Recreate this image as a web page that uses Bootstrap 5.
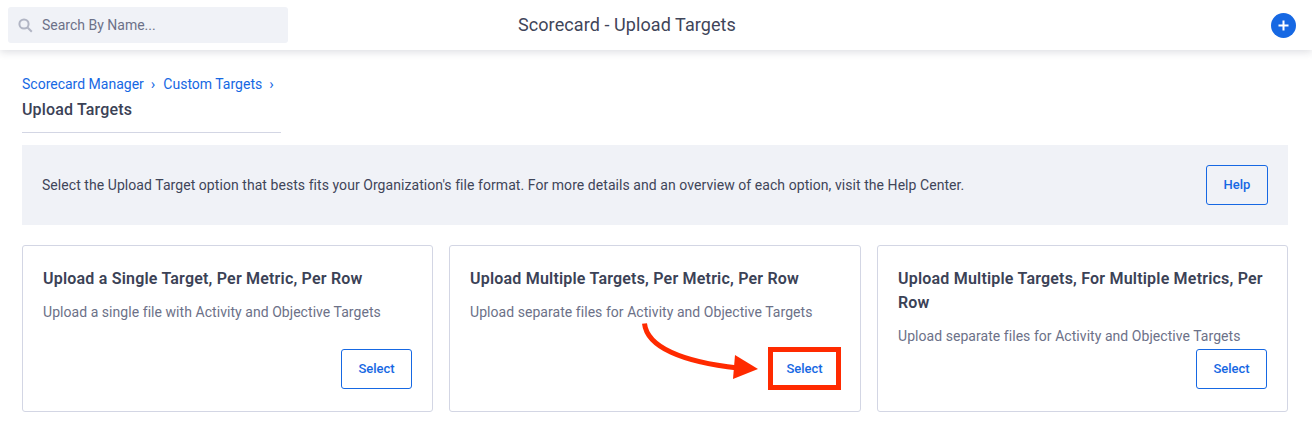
<!DOCTYPE html>
<html lang="en">
<head>
    <meta charset="UTF-8">
    <title>Scorecard - Upload Targets</title>
    <link href="https://cdn.jsdelivr.net/npm/bootstrap@5.3.0/dist/css/bootstrap.min.css" rel="stylesheet">
    <style>
        body { font-family: "Roboto", "Liberation Sans", sans-serif; color: #3b4256; background: #fff; height: 426px; overflow: hidden; position: relative; }
        .top-bar { height: 50px; padding: 7px 16px 7px 8px; box-shadow: 0 2px 8px rgba(40, 45, 70, .16); }
        .search-box { height: 36px; width: 280px; background: #f0f2f7; border-radius: 3px; padding-left: 10px; gap: 9px; color: #6c7188; font-size: 14px; }
        .top-title { font-size: 18px; letter-spacing: .08px; margin-left: 230px; margin-right: auto; margin-bottom: 2px; color: #3f4559; }
        .add-btn { width: 25px; height: 25px; border-radius: 50%; background: #1668e3; }
        .page-body { padding: 25px 24px 0 22px; }
        .crumbs { font-size: 14px; line-height: 18px; gap: 7px; }
        .crumbs a { color: #1668e3; text-decoration: none; }
        .crumbs a + span + a { margin-left: 1px; }
        .crumbs span { color: #1668e3; font-size: 15px; }
        .page-name { font-size: 16px; line-height: 20px; font-weight: 500; letter-spacing: .15px; margin-top: 7px; padding-bottom: 12px; width: 259px; border-bottom: 1px solid #d3d6e4; }
        .help-banner { height: 80px; margin-top: 12px; background: #f0f2f7; padding: 0 20px; font-size: 14px; letter-spacing: .06px; color: #3f4559; }
        .outline-act { border: 1px solid #1668e3; border-radius: 3px; color: #1668e3; background: transparent; font-weight: 500; font-size: 13px; padding: 0; height: 40px; }
        .outline-act:hover { color: #1668e3; }
        .help-act { width: 62px; }
        .select-act { width: 71px; }
        .card-row { display: grid; grid-template-columns: 411px 412px 411px; gap: 16px; margin-top: 20px; }
        .target-card { height: 167px; border: 1px solid #d3d6e4; border-radius: 3px; padding: 21px 20px 22px 20px; }
        .target-card h5 { font-size: 16px; line-height: 24px; font-weight: 600; letter-spacing: .2px; margin: 0 0 11px; color: #3b4256; }
        .target-card p { font-size: 14px; line-height: 20px; letter-spacing: .05px; color: #6c7188; margin: 0; }
        .annotation { position: absolute; left: 620px; top: 310px; }
    </style>
</head>
<body>
    <div class="top-bar d-flex align-items-center">
        <div class="search-box d-flex align-items-center">
            <svg width="15" height="15" viewBox="0 0 15 15" fill="none" stroke="#b1b5c4" stroke-width="2"><circle cx="6" cy="6" r="4.6"/><path d="M9.5 9.5L13.8 13.8"/></svg>
            <span>Search By Name...</span>
        </div>
        <div class="top-title">Scorecard - Upload Targets</div>
        <div class="add-btn d-flex align-items-center justify-content-center">
            <svg width="11" height="11" viewBox="0 0 11 11" stroke="#fff" stroke-width="2"><path d="M5.5 .5v10M.5 5.5h10"/></svg>
        </div>
    </div>

    <div class="page-body">
        <div class="crumbs d-flex align-items-center">
            <a href="#">Scorecard Manager</a><span>›</span>
            <a href="#">Custom Targets</a><span>›</span>
        </div>
        <div class="page-name">Upload Targets</div>

        <div class="help-banner d-flex align-items-center justify-content-between">
            <div>Select the Upload Target option that bests fits your Organization's file format. For more details and an overview of each option, visit the Help Center.</div>
            <button class="btn outline-act help-act">Help</button>
        </div>

        <div class="card-row">
            <div class="target-card d-flex flex-column">
                <h5>Upload a Single Target, Per Metric, Per Row</h5>
                <p>Upload a single file with Activity and Objective Targets</p>
                <div class="mt-auto d-flex justify-content-end"><button class="btn outline-act select-act">Select</button></div>
            </div>
            <div class="target-card d-flex flex-column">
                <h5>Upload Multiple Targets, Per Metric, Per Row</h5>
                <p>Upload separate files for Activity and Objective Targets</p>
                <div class="mt-auto d-flex justify-content-end"><button class="btn outline-act select-act">Select</button></div>
            </div>
            <div class="target-card d-flex flex-column">
                <h5>Upload Multiple Targets, For Multiple Metrics, Per Row</h5>
                <p>Upload separate files for Activity and Objective Targets</p>
                <div class="mt-auto d-flex justify-content-end"><button class="btn outline-act select-act">Select</button></div>
            </div>
        </div>
    </div>

    <svg class="annotation" width="240" height="116" viewBox="0 0 240 116" fill="none">
        <rect x="150.5" y="39.5" width="68" height="38" stroke="#ff2a00" stroke-width="5"/>
        <path d="M24.5 13.5C27 37 62 52 118 58" stroke="#ff2a00" stroke-width="5"/>
        <path d="M115 45L138 59L113 69Z" fill="#ff2a00"/>
    </svg>
</body>
</html>
